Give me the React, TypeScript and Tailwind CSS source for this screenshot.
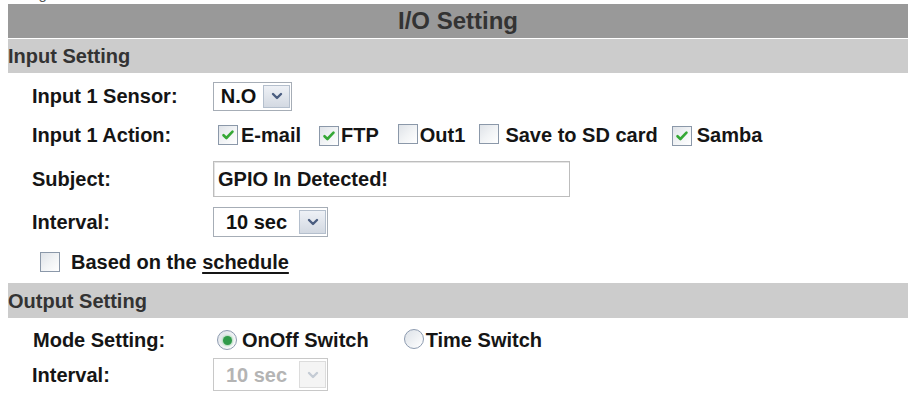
import React from "react";

function Check({ checked }: { checked?: boolean }) {
  return (
    <span className="inline-flex w-[20px] h-[20px] shrink-0 items-center justify-center border border-[#8b98a9] bg-gradient-to-br from-[#dfe3e8] via-[#f1f3f5] to-white">
      {checked && (
        <svg width="14" height="12" viewBox="0 0 14 12">
          <path d="M2.5 6.2 L5.4 9 L11.5 2.6" fill="none" stroke="#35a835" strokeWidth="2.6" strokeLinecap="round" strokeLinejoin="round" />
        </svg>
      )}
    </span>
  );
}

function Radio({ checked }: { checked?: boolean }) {
  return (
    <span className="inline-flex w-[20px] h-[20px] shrink-0 items-center justify-center rounded-full border-[1.5px] border-[#8d9bb0] bg-gradient-to-br from-[#dde2e8] to-white">
      {checked && <span className="w-[9px] h-[9px] rounded-full bg-[#2f9a4a] shadow-[0_0_2px_1px_#a8d8b4]" />}
    </span>
  );
}

function Chevron({ color }: { color: string }) {
  return (
    <svg width="12" height="8" viewBox="0 0 12 8">
      <path d="M2 2 L6 6 L10 2" fill="none" stroke={color} strokeWidth="2.4" strokeLinecap="round" strokeLinejoin="round" />
    </svg>
  );
}

function Select({ text, w, h, disabled }: { text: string; w: string; h: string; disabled?: boolean }) {
  return (
    <div className={`flex items-center border bg-white ${w} ${h} ${disabled ? "border-[#c8c8c8]" : "border-[#a6adb6]"}`}>
      <span className={`flex-1 text-center ${disabled ? "text-[#b4b4b4]" : "text-[#111]"}`}>{text}</span>
      <span
        className={`mr-[1px] flex w-[27px] h-[calc(100%-4px)] items-center justify-center border ${
          disabled ? "border-[#dcdcdc] bg-[#f4f4f4]" : "border-[#b4bfcd] bg-gradient-to-b from-[#eef1f6] to-[#d3d9e2]"
        }`}
      >
        <Chevron color={disabled ? "#c4cbd4" : "#4a5d80"} />
      </span>
    </div>
  );
}

export default function App() {
  return (
    <div className="w-[909px] h-[395px] overflow-hidden bg-white font-['Liberation_Sans',Arial,sans-serif] font-bold text-[20px] leading-none text-[#151515]">
      <div className="h-[4px] overflow-hidden pl-[26px]">
        <div className="mt-[-14px] text-[15px] font-normal text-[#555]">Figure</div>
      </div>
      <div className="ml-[8px] w-[900px]">
        <div className="h-[34px] bg-[#999999] flex items-center justify-center text-[24px] text-[#333]">I/O Setting</div>
        <div className="mt-[1px] h-[34px] bg-[#cccccc] flex items-center text-[#333]">Input Setting</div>

        <div className="h-[46px] flex items-center pl-[24px]">
          <span className="w-[181px]">Input 1 Sensor:</span>
          <Select text="N.O" w="w-[79px]" h="h-[29px]" />
        </div>

        <div className="h-[32px] flex items-center pl-[24px]">
          <span className="w-[181px]">Input 1 Action:</span>
          <div className="flex items-center ml-[5px]">
            <Check checked />
            <span className="ml-[3px]">E-mail</span>
            <span className="ml-[18px]"><Check checked /></span>
            <span className="ml-[2px]">FTP</span>
            <span className="ml-[19px]"><Check /></span>
            <span className="ml-[2px]">Out1</span>
            <span className="ml-[14px]"><Check /></span>
            <span className="ml-[6px]">Save to SD card</span>
            <span className="ml-[14px]"><Check checked /></span>
            <span className="ml-[5px]">Samba</span>
          </div>
        </div>

        <div className="h-[56px] flex items-center pl-[24px]">
          <span className="w-[181px]">Subject:</span>
          <div className="w-[357px] h-[36px] border border-[#bdbdbd] shadow-[inset_1px_1px_0_#e4e4e4] flex items-center pl-[4px]">GPIO In Detected!</div>
        </div>

        <div className="h-[30px] flex items-center pl-[24px]">
          <span className="w-[181px]">Interval:</span>
          <Select text="10 sec" w="w-[115px]" h="h-[30px]" />
        </div>

        <div className="h-[46px] pt-[4px] flex items-center pl-[32px]">
          <Check />
          <span className="ml-[11px]">
            Based on the <span className="underline decoration-[1.5px] underline-offset-[3px]">schedule</span>
          </span>
        </div>

        <div className="h-[35px] bg-[#cccccc] flex items-center text-[#333]">Output Setting</div>

        <div className="h-[40px] pt-[4px] flex items-center pl-[25px]">
          <span className="w-[184px]">Mode Setting:</span>
          <Radio checked />
          <span className="ml-[5px]">OnOff Switch</span>
          <span className="ml-[35px]"><Radio /></span>
          <span className="ml-[2px]">Time Switch</span>
        </div>

        <div className="h-[33px] flex items-center pl-[24px]">
          <span className="w-[181px]">Interval:</span>
          <Select text="10 sec" w="w-[115px]" h="h-[33px]" disabled />
        </div>
      </div>
    </div>
  );
}
